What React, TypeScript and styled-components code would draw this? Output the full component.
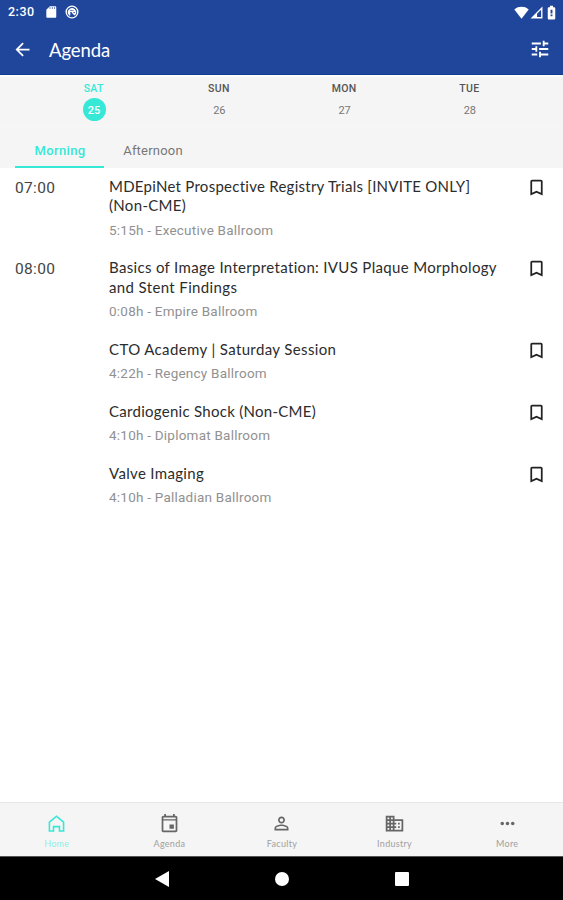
import React from "react";
import styled, { createGlobalStyle } from "styled-components";

const ACCENT = "#36e8d6";

const GlobalStyle = createGlobalStyle`
  *, *::before, *::after { box-sizing: border-box; }
  body { margin: 0; background: #fff; font-family: Roboto, sans-serif; }
`;

const Screen = styled.div`
  display: flex;
  flex-direction: column;
  width: 563px;
  height: 900px;
  background: #fff;
  overflow: hidden;
`;

const Header = styled.header`
  height: 75px;
  flex: none;
  background: #20469b;
  color: #fff;
  border-bottom: 1px solid #123b91;
`;

const StatusBar = styled.div`
  display: flex;
  align-items: center;
  justify-content: space-between;
  height: 24px;
  padding: 0 4px 0 8px;
`;

const StatusGroup = styled.div<{ $gap: number }>`
  display: flex;
  align-items: center;
  gap: ${(p) => p.$gap}px;
`;

const Clock = styled.span`
  width: 27px;
  margin-right: 2px;
  font-size: 12.5px;
  line-height: 24px;
  font-weight: 500;
  letter-spacing: 0.5px;
  white-space: nowrap;
`;

const AppBar = styled.div`
  display: flex;
  align-items: center;
  height: 50px;
  padding: 0 12px 0 12px;
`;

const AppTitle = styled.h1`
  flex: 1;
  margin: 1px 0 0 16px;
  font: 400 18.5px/24px Lato, sans-serif;
  letter-spacing: -0.1px;
`;

const IconButton = styled.button`
  display: flex;
  padding: 0;
  border: 0;
  background: none;
  color: inherit;
`;

const Glyph = styled.svg<{ $size: number }>`
  display: block;
  flex: none;
  width: ${(p) => p.$size}px;
  height: ${(p) => p.$size}px;
  fill: currentColor;
`;

const DayStrip = styled.div`
  display: grid;
  grid-template-columns: repeat(4, 1fr);
  flex: none;
  height: 52px;
  padding: 6px 31px 0;
  background: #f5f5f5;
  border-top: 2px solid #fcfcfb;
  border-bottom: 1px solid #f7f7f7;
`;

const Day = styled.button<{ $active?: boolean }>`
  display: flex;
  flex-direction: column;
  align-items: center;
  padding: 0;
  border: 0;
  background: none;
  font-family: Roboto, sans-serif;
  color: ${(p) => (p.$active ? ACCENT : "#555")};
`;

const DayName = styled.span`
  font-size: 10.5px;
  line-height: 11px;
  font-weight: 500;
  letter-spacing: 0.3px;
`;

const DayNumber = styled.span<{ $active?: boolean }>`
  width: 23px;
  height: 23px;
  margin-top: 4px;
  margin-left: 1px;
  border-radius: 50%;
  font-size: 11px;
  line-height: 25px;
  text-align: center;
  font-weight: ${(p) => (p.$active ? 500 : 400)};
  color: ${(p) => (p.$active ? "#fff" : "#777")};
  background: ${(p) => (p.$active ? ACCENT : "transparent")};
`;

const Tabs = styled.div`
  display: flex;
  flex: none;
  height: 41px;
  padding: 6px 15px 0;
  background: #f5f5f5;
`;

const Tab = styled.button<{ $active?: boolean }>`
  width: ${(p) => (p.$active ? 89 : 97)}px;
  height: 35px;
  padding: 2px 0 0 1px;
  border: 0;
  border-bottom: 2px solid ${(p) => (p.$active ? ACCENT : "transparent")};
  background: none;
  color: ${(p) => (p.$active ? ACCENT : "#777")};
  font: ${(p) => (p.$active ? 500 : 400)} 13px/31px Roboto, sans-serif;
  letter-spacing: ${(p) => (p.$active ? 0.35 : 0.2)}px;
`;

const Sessions = styled.main`
  flex: 1;
  padding-top: 8.6px;
`;

const Session = styled.article`
  display: grid;
  grid-template-columns: 94px 1fr 20px;
  padding: 0 17px 18px 15px;
`;

const Time = styled.time`
  padding-top: 1px;
  font-size: 15.5px;
  line-height: 21px;
  letter-spacing: 0.35px;
  color: #444;
`;

const SessionTitle = styled.h2`
  margin: 0;
  font: 400 15px/19.5px Lato, sans-serif;
  color: #2c2c2c;
`;

const TitleLine = styled.span<{ $tracking: number }>`
  display: block;
  white-space: nowrap;
  letter-spacing: ${(p) => p.$tracking}px;
`;

const Place = styled.p`
  margin: 5px 0 0;
  font-size: 13.5px;
  line-height: 19.5px;
  letter-spacing: 0.23px;
  color: #919191;
`;

const Bookmark = styled(IconButton)`
  align-self: start;
  color: #222;
`;

const BottomNav = styled.nav`
  display: grid;
  grid-template-columns: repeat(5, 1fr);
  flex: none;
  height: 54px;
  padding-top: 10px;
  background: #f5f5f5;
  border-top: 1px solid #e7e7e7;
`;

const NavItem = styled.button<{ $active?: boolean }>`
  display: flex;
  flex-direction: column;
  align-items: center;
  padding: 0 0 0 1px;
  border: 0;
  background: none;
  color: ${(p) => (p.$active ? ACCENT : "#666")};
`;

const NavLabel = styled.span<{ $active?: boolean }>`
  margin-top: 4px;
  font: 400 9px/11px Lato, sans-serif;
  letter-spacing: 0.3px;
  color: ${(p) => (p.$active ? "#8cf0e6" : "#a0a0a0")};
`;

const SystemBar = styled.div`
  display: flex;
  flex: none;
  align-items: center;
  justify-content: center;
  gap: 104px;
  height: 44px;
  background: #000;
  border-top: 1px solid #555;
  color: #fff;
`;

const paths = {
  back: "M20 11H7.83l5.59-5.59L12 4l-8 8 8 8 1.41-1.41L7.83 13H20v-2z",
  tune: "M3 17v2h6v-2H3zM3 5v2h10V5H3zm10 16v-2h8v-2h-8v-2h-2v6h2zM7 9v2H3v2h4v2h2V9H7zm14 4v-2H11v2h10zm-6-4h2V7h4V5h-4V3h-2v6z",
  bookmark: "M17 3H7c-1.1 0-2 .9-2 2v16l7-3 7 3V5c0-1.1-.9-2-2-2zm0 15-5-2.18L7 18V5h10v13z",
  home: "M12 2.500 3 10v11.500h6.500v-5h5v5H21V10L12 2.500zm0 2.400 7.200 6v8.800h-2.900v-5.200H7.700v5.200H4.800v-8.800L12 4.900z",
  event: "M17 13h-5v5h5v-5zM16 1v2H8V1H6v2H5c-1.11 0-1.99.9-1.99 2L3 20c0 1.1.89 2 2 2h14c1.1 0 2-.9 2-2V5c0-1.1-.9-2-2-2h-1V1h-2zm3 19H5V8.5h14V20zm0-13H5V5h14v2z",
  person: "M12 5.9a2.1 2.1 0 1 1 0 4.2 2.1 2.1 0 0 1 0-4.2m0 9c2.97 0 6.1 1.46 6.1 2.1v1.1H5.9V17c0-.64 3.13-2.1 6.1-2.1M12 4C9.79 4 8 5.79 8 8s1.79 4 4 4 4-1.79 4-4-1.79-4-4-4zm0 9c-2.67 0-8 1.34-8 4v3h16v-3c0-2.66-5.33-4-8-4z",
  business: "M12 7V3H2v18h20V7H12zM6 19H4v-2h2v2zm0-4H4v-2h2v2zm0-4H4V9h2v2zm0-4H4V5h2v2zm4 12H8v-2h2v2zm0-4H8v-2h2v2zm0-4H8V9h2v2zm0-4H8V5h2v2zm10 12h-8v-2h2v-2h-2v-2h2v-2h-2V9h8v10zm-2-8h-2v2h2v-2zm0 4h-2v2h2v-2z",
  more: "M6 10c-1.1 0-2 .9-2 2s.9 2 2 2 2-.9 2-2-.9-2-2-2zm12 0c-1.1 0-2 .9-2 2s.9 2 2 2 2-.9 2-2-.9-2-2-2zm-6 0c-1.1 0-2 .9-2 2s.9 2 2 2 2-.9 2-2-.9-2-2-2z",
  sd: "M19 2h-9L4 8v12c0 1.1.9 2 2 2h13c1.1 0 2-.9 2-2V4c0-1.1-.9-2-2-2zm-8 4.500H9.500V4H11v2.500zm4 0h-1.500V4H15v2.500zm4 0h-1.500V4H19v2.500z",
  wifi: "M12 22 .5 7C4 4 7.7 2.8 12 2.8S20 4 23.500 7z",
  signal: "M23 1v22H1L23 1zM20.500 7 13 14.500v6h7.500V7z",
  battery: "M16 3.500h-1.500V1h-5v2.500H8c-1.100 0-2 .9-2 2V21c0 1.100.9 2 2 2h8c1.100 0 2-.9 2-2V5.500c0-1.100-.9-2-2-2zM13.500 18h-3v-3h3v3zm0-4.500h-3v-6h3v6z",
};

type IconName = keyof typeof paths;

const Icon = ({ name, size }: { name: IconName; size: number }) => (
  <Glyph $size={size} viewBox="0 0 24 24" aria-hidden="true">
    <path fillRule="evenodd" d={paths[name]} />
  </Glyph>
);

const SyncIcon = () => (
  <Glyph $size={14} viewBox="0 0 24 24" aria-hidden="true">
    <g fill="none" stroke="currentColor" strokeWidth="2.3">
      <circle cx="12" cy="12" r="10" />
      <path d="M7 16a6 6 0 1 1 10 0M12 12l5 5M8 18V11h7M11 8h5v4" />
    </g>
  </Glyph>
);

const days = [
  { name: "SAT", date: 25 },
  { name: "SUN", date: 26 },
  { name: "MON", date: 27 },
  { name: "TUE", date: 28 },
];

const sessions = [
  {
    time: "07:00",
    lines: [
      { text: "MDEpiNet Prospective Registry Trials [INVITE ONLY]", tracking: 0.26 },
      { text: "(Non-CME)", tracking: 0.32 },
    ],
    place: "5:15h - Executive Ballroom",
  },
  {
    time: "08:00",
    lines: [
      { text: "Basics of Image Interpretation: IVUS Plaque Morphology", tracking: 0.33 },
      { text: "and Stent Findings", tracking: 0.37 },
    ],
    place: "0:08h - Empire Ballroom",
  },
  {
    lines: [{ text: "CTO Academy | Saturday Session", tracking: 0.37 }],
    place: "4:22h - Regency Ballroom",
  },
  {
    lines: [{ text: "Cardiogenic Shock (Non-CME)", tracking: 0.28 }],
    place: "4:10h - Diplomat Ballroom",
  },
  {
    lines: [{ text: "Valve Imaging", tracking: 0.33 }],
    place: "4:10h - Palladian Ballroom",
  },
];

const navItems: { label: string; icon: IconName }[] = [
  { label: "Home", icon: "home" },
  { label: "Agenda", icon: "event" },
  { label: "Faculty", icon: "person" },
  { label: "Industry", icon: "business" },
  { label: "More", icon: "more" },
];

export default function App() {
  return (
    <Screen>
      <GlobalStyle />
      <Header>
        <StatusBar>
          <StatusGroup $gap={7}>
            <Clock>2:30</Clock>
            <Icon name="sd" size={14} />
            <SyncIcon />
          </StatusGroup>
          <StatusGroup $gap={1}>
            <Icon name="wifi" size={15} />
            <Icon name="signal" size={13} />
            <Icon name="battery" size={15} />
          </StatusGroup>
        </StatusBar>
        <AppBar>
          <IconButton aria-label="Back"><Icon name="back" size={21} /></IconButton>
          <AppTitle>Agenda</AppTitle>
          <IconButton aria-label="Filter"><Icon name="tune" size={22} /></IconButton>
        </AppBar>
      </Header>
      <DayStrip>
        {days.map((day, i) => (
          <Day key={day.name} $active={i === 0}>
            <DayName>{day.name}</DayName>
            <DayNumber $active={i === 0}>{day.date}</DayNumber>
          </Day>
        ))}
      </DayStrip>
      <Tabs>
        <Tab $active>Morning</Tab>
        <Tab>Afternoon</Tab>
      </Tabs>
      <Sessions>
        {sessions.map((s) => (
          <Session key={s.place}>
            <Time>{s.time}</Time>
            <div>
              <SessionTitle>
                {s.lines.map((line) => (
                  <TitleLine key={line.text} $tracking={line.tracking}>{line.text}</TitleLine>
                ))}
              </SessionTitle>
              <Place>{s.place}</Place>
            </div>
            <Bookmark aria-label="Bookmark"><Icon name="bookmark" size={21} /></Bookmark>
          </Session>
        ))}
      </Sessions>
      <BottomNav>
        {navItems.map((item, i) => (
          <NavItem key={item.label} $active={i === 0}>
            <Icon name={item.icon} size={21} />
            <NavLabel $active={i === 0}>{item.label}</NavLabel>
          </NavItem>
        ))}
      </BottomNav>
      <SystemBar>
        <Glyph $size={16} viewBox="0 0 16 16"><path d="M15 0v16L1 8z" /></Glyph>
        <Glyph $size={16} viewBox="0 0 16 16"><circle cx="8" cy="8" r="7" /></Glyph>
        <Glyph $size={16} viewBox="0 0 16 16"><rect x="1" y="1" width="14" height="14" rx="1" /></Glyph>
      </SystemBar>
    </Screen>
  );
}
